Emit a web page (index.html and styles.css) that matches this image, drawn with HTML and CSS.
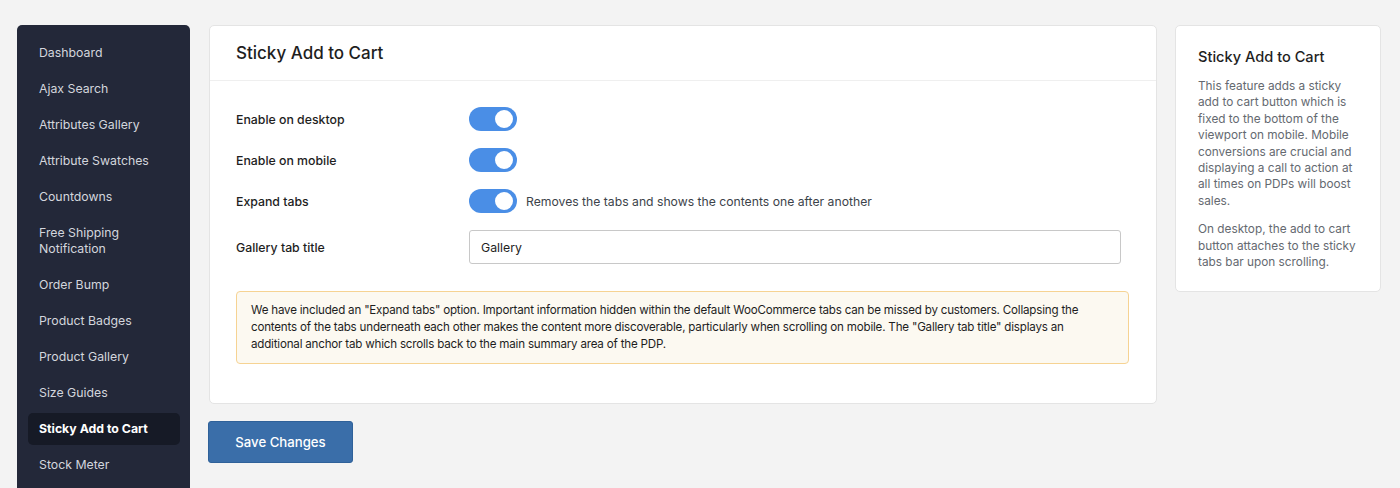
FILE: index.html
```html
<!DOCTYPE html>
<html lang="en">
  <head>
    <meta charset="utf-8" />
    <meta name="viewport" content="width=device-width, initial-scale=1.0" />
    <title>Sticky Add to Cart</title>
    <link rel="stylesheet" href="styles.css">
  </head>
  <body>
    <div class="layout">
      <nav class="sidebar">
        <a class="nav-item" href="#">Dashboard</a>
        <a class="nav-item" href="#">Ajax Search</a>
        <a class="nav-item" href="#">Attributes Gallery</a>
        <a class="nav-item" href="#">Attribute Swatches</a>
        <a class="nav-item" href="#">Countdowns</a>
        <a class="nav-item" href="#">Free Shipping<br />Notification</a>
        <a class="nav-item" href="#">Order Bump</a>
        <a class="nav-item" href="#">Product Badges</a>
        <a class="nav-item" href="#">Product Gallery</a>
        <a class="nav-item" href="#">Size Guides</a>
        <a class="nav-item active" href="#">Sticky Add to Cart</a>
        <a class="nav-item" href="#">Stock Meter</a>
      </nav>

      <div class="main">
        <div class="card">
          <div class="card-header">
            <h2>Sticky Add to Cart</h2>
          </div>
          <div class="card-body">
            <div class="form-row">
              <label class="form-label">Enable on desktop</label>
              <div class="form-field">
                <span class="toggle"><span class="knob"></span></span>
              </div>
            </div>
            <div class="form-row">
              <label class="form-label">Enable on mobile</label>
              <div class="form-field">
                <span class="toggle"><span class="knob"></span></span>
              </div>
            </div>
            <div class="form-row">
              <label class="form-label">Expand tabs</label>
              <div class="form-field">
                <span class="toggle"><span class="knob"></span></span>
                <span class="field-help">Removes the tabs and shows the contents one after another</span>
              </div>
            </div>
            <div class="form-row">
              <label class="form-label" for="gallery_title">Gallery tab title</label>
              <div class="form-field">
                <input id="gallery_title" class="text-input" type="text" value="Gallery" />
              </div>
            </div>

            <div class="notice">
              We have included an "Expand tabs" option. Important information hidden within the default WooCommerce tabs can be missed by customers. Collapsing the contents of the tabs underneath each other makes the content more discoverable, particularly when scrolling on mobile. The "Gallery tab title" displays an additional anchor tab which scrolls back to the main summary area of the PDP.
            </div>
          </div>
        </div>

        <div class="actions">
          <button class="save-button" type="button">Save Changes</button>
        </div>
      </div>

      <aside class="info-card">
        <h3>Sticky Add to Cart</h3>
        <p>This feature adds a sticky add to cart button which is fixed to the bottom of the viewport on mobile. Mobile conversions are crucial and displaying a call to action at all times on PDPs will boost sales.</p>
        <p>On desktop, the add to cart button attaches to the sticky tabs bar upon scrolling.</p>
      </aside>
    </div>
  </body>
</html>
```

FILE: styles.css
```css
html,
body {
  margin: 0;
  padding: 0;
}

body {
  background-color: #f3f3f3;
  font-family: "Inter", "Noto Sans", sans-serif;
  color: #1e1e1e;
  font-size: 12.2px;
  height: 488px;
  overflow: hidden;
}

.layout {
  display: flex;
  align-items: flex-start;
  padding: 25px 19px 0 17px;
}

/* Sidebar */
.sidebar {
  flex: 0 0 173px;
  box-sizing: border-box;
  display: flex;
  flex-direction: column;
  gap: 4px;
  padding: 12px 10px 20px 11px;
  background-color: #232839;
  border-radius: 5px;
  min-height: 520px;
}

.nav-item {
  display: block;
  padding: 8px 11px;
  line-height: 16px;
  font-size: 12.3px;
  color: #d3d6dd;
  text-decoration: none;
  border-radius: 5px;
}

.nav-item.active {
  background-color: #161a26;
  color: #ffffff;
  font-weight: 700;
}

/* Main column */
.main {
  flex: 1;
  margin-left: 19px;
}

.card {
  background-color: #ffffff;
  border: 1px solid #e4e4e4;
  border-radius: 5px;
}

.card-header {
  height: 54px;
  display: flex;
  align-items: center;
  padding: 0 26px;
  border-bottom: 1px solid #efefef;
}

.card-header h2 {
  margin: 0;
  font-size: 17px;
  font-weight: 500;
  color: #1e1e1e;
}

.card-body {
  padding: 26px 35px 39px 26px;
  display: flex;
  flex-direction: column;
  gap: 17px;
}

.form-row {
  display: flex;
  align-items: center;
}

.form-label {
  flex: 0 0 233px;
  font-weight: 500;
  font-size: 12.3px;
  color: #1e1e1e;
}

.form-field {
  flex: 1;
  display: flex;
  align-items: center;
  gap: 9px;
}

.field-help {
  color: #3c434a;
  font-size: 12.2px;
}

.toggle {
  position: relative;
  display: inline-block;
  width: 48px;
  height: 24px;
  border-radius: 12px;
  background-color: #4a8ee6;
}

.knob {
  position: absolute;
  top: 3px;
  right: 4px;
  width: 18px;
  height: 18px;
  border-radius: 50%;
  background-color: #ffffff;
}

.text-input {
  box-sizing: border-box;
  width: 100%;
  height: 34px;
  padding: 0 11px;
  border: 1px solid #c8c8c8;
  border-radius: 3px;
  font-family: inherit;
  font-size: 12.3px;
  color: #1e1e1e;
}

.notice {
  margin-top: 10px;
  margin-right: -8px;
  padding: 10px 14px;
  background-color: #fcf9f1;
  border: 1px solid #f6d393;
  border-radius: 4px;
  line-height: 17px;
  font-size: 11.6px;
  letter-spacing: -0.2px;
  color: #1e1e1e;
}

.actions {
  margin-top: 17px;
  margin-left: -1px;
}

.save-button {
  width: 145px;
  height: 42px;
  background-color: #3a6ea9;
  border: 1px solid #2f6199;
  border-radius: 3px;
  color: #ffffff;
  font-family: inherit;
  font-size: 13.2px;
  font-weight: 500;
}

/* Info card */
.info-card {
  flex: 0 0 206px;
  box-sizing: border-box;
  margin-left: 18px;
  padding: 22px 20px 21px 22px;
  background-color: #ffffff;
  border: 1px solid #e4e4e4;
  border-radius: 5px;
}

.info-card h3 {
  margin: 0 0 12px;
  font-size: 14.6px;
  font-weight: 500;
  color: #1e1e1e;
}

.info-card p {
  margin: 0 0 12px;
  font-size: 11.8px;
  line-height: 16.4px;
  color: #646970;
}

.info-card p:last-child {
  margin-bottom: 0;
}
```
